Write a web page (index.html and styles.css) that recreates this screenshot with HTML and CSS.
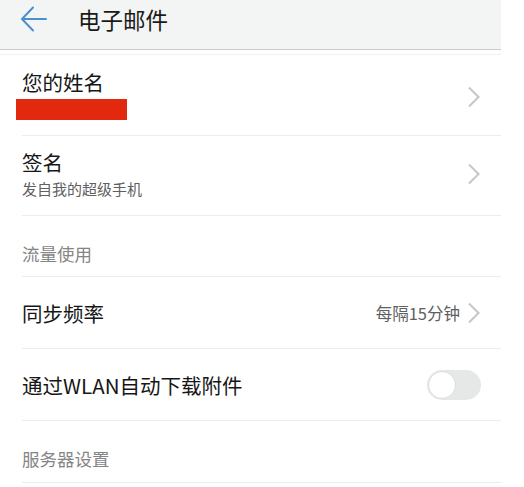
FILE: index.html
```html
<!DOCTYPE html>
<html lang="zh-CN">
<head>
<meta charset="utf-8">
<title>电子邮件</title>
<link rel="stylesheet" href="styles.css">
</head>
<body>
<div class="screen">
  <header class="topbar">
    <svg class="back" width="26" height="26" viewBox="0 0 26 26">
      <path d="M1 13 H25 M12 1.5 L1 13 L12 24.5" fill="none" stroke="#4b8fd0" stroke-width="2" stroke-linecap="round" stroke-linejoin="round"/>
    </svg>
    <h1 class="title">电子邮件</h1>
  </header>
  <div class="list">
    <div class="row row-name">
      <div class="main">
        <div class="label">您的姓名</div>
        <div class="redbar"></div>
      </div>
      <svg class="chev" width="14" height="22" viewBox="0 0 14 22"><path d="M2 1.5 L11.5 11 L2 20.5" fill="none" stroke="#c6c6c6" stroke-width="2"/></svg>
    </div>
    <div class="row row-sign">
      <div class="main">
        <div class="label">签名</div>
        <div class="sub">发自我的超级手机</div>
      </div>
      <svg class="chev" width="14" height="22" viewBox="0 0 14 22"><path d="M2 1.5 L11.5 11 L2 20.5" fill="none" stroke="#c6c6c6" stroke-width="2"/></svg>
    </div>
    <div class="section">流量使用</div>
    <div class="row row-plain">
      <div class="label">同步频率</div>
      <div class="right">
        <span class="value">每隔15分钟</span>
        <svg class="chev" width="14" height="22" viewBox="0 0 14 22"><path d="M2 1.5 L11.5 11 L2 20.5" fill="none" stroke="#c6c6c6" stroke-width="2"/></svg>
      </div>
    </div>
    <div class="row row-plain">
      <div class="label">通过WLAN自动下载附件</div>
      <div class="toggle"><div class="knob"></div></div>
    </div>
    <div class="section section-last">服务器设置</div>
  </div>
</div>
</body>
</html>
```

FILE: styles.css
```css
html, body {
  margin: 0;
  padding: 0;
  background: #ffffff;
}

body {
  font-family: "Noto Sans CJK SC", "Noto Sans", sans-serif;
  color: #161616;
}

.screen {
  width: 501px;
  background: #ffffff;
}

.topbar {
  height: 49px;
  background: #f3f4f4;
  border-bottom: 1px solid #c9cbcb;
  display: flex;
  align-items: flex-start;
  box-sizing: content-box;
}

.back {
  margin: 6px 0 0 21px;
  flex: none;
}

.title {
  margin: 0 0 0 31px;
  font-size: 22.5px;
  font-weight: 400;
  line-height: 38px;
  color: #1a1a1a;
}

.list {
  margin-top: 4px;
  border-top: 1px solid #f2f2f2;
}

.row {
  margin-left: 22px;
  padding-right: 20px;
  border-bottom: 1px solid #ececec;
  display: flex;
  align-items: center;
  justify-content: space-between;
}

.label {
  font-size: 20.5px;
  line-height: 28px;
  color: #161616;
}

.row-name {
  padding-top: 13px;
  padding-bottom: 15px;
}

.row-name .chev {
  margin-top: 6px;
}

.redbar {
  margin: 3px 0 0 -6px;
  width: 111px;
  height: 21px;
  background: #e2290f;
}

.row-sign {
  padding-top: 12px;
  padding-bottom: 16px;
}

.sub {
  margin-top: 3px;
  font-size: 15px;
  line-height: 20px;
  color: #606060;
}

.section {
  margin-left: 22px;
  padding: 26px 0 10px;
  font-size: 17.5px;
  line-height: 24px;
  color: #858585;
  border-bottom: 1px solid #ececec;
}

.section-last {
  padding-bottom: 11px;
}

.row-plain {
  height: 71px;
}

.right {
  display: flex;
  align-items: center;
  gap: 7px;
}

.value {
  font-size: 16.5px;
  color: #606060;
}

.toggle {
  width: 54px;
  height: 30px;
  border-radius: 15px;
  background: #e6e8e8;
  position: relative;
}

.knob {
  position: absolute;
  left: 1px;
  top: 1px;
  width: 26px;
  height: 26px;
  border-radius: 50%;
  background: #ffffff;
  border: 1px solid #dcdede;
}
```
